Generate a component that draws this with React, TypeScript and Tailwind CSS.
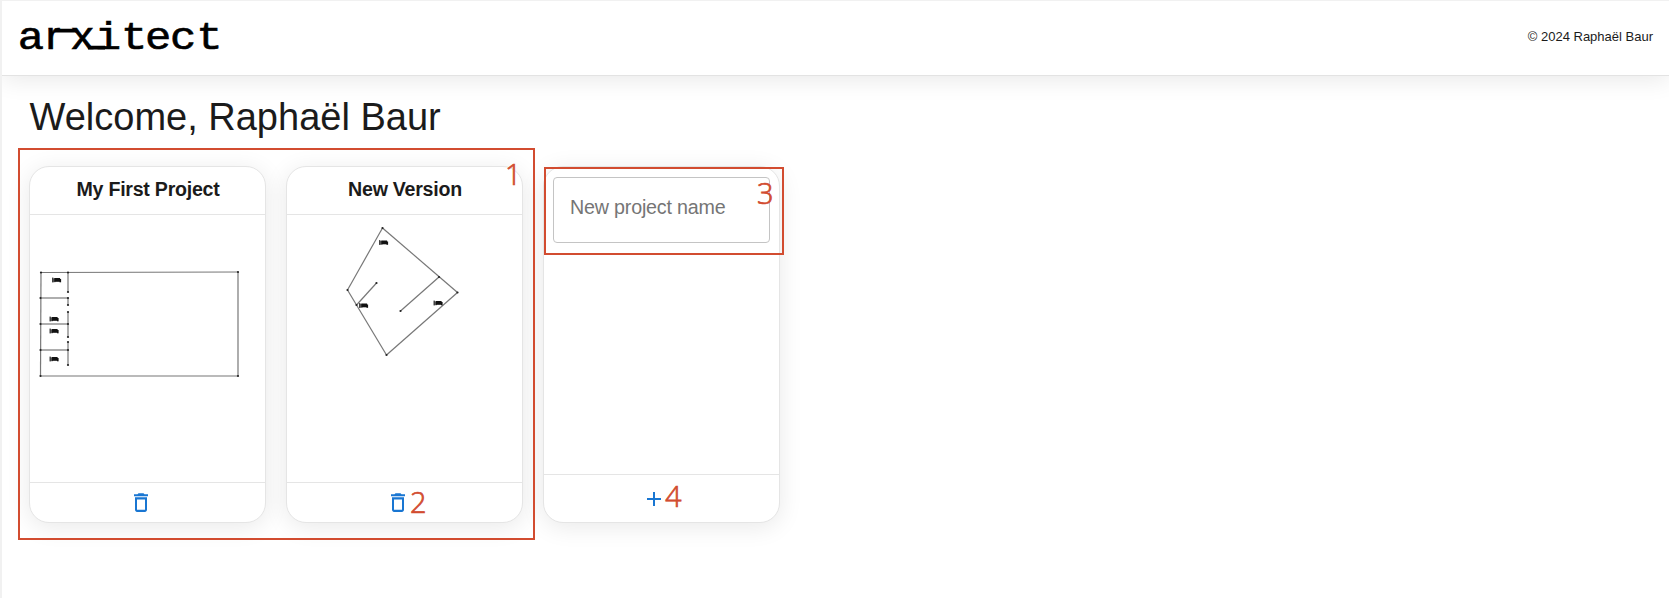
import React from "react";

type Point = [number, number];

function Plan({ lines, dots, labels }: { lines: [number, number, number, number][]; dots: Point[]; labels: Point[] }) {
  return (
    <svg width="235" height="267" viewBox="0 0 235 267" className="block">
      {lines.map(([a, b, c, d], i) => (
        <line key={i} x1={a} y1={b} x2={c} y2={d} stroke="#777" strokeWidth="1.2" />
      ))}
      {dots.map(([x, y], i) => (
        <circle key={i} cx={x} cy={y} r="1.1" fill="#222" />
      ))}
      {labels.map(([x, y], i) => (
        <g key={i} fill="#111">
          <rect x={x - 4.5} y={y - 2.4} width="1.4" height="4.8" opacity="0.8" />
          <rect x={x - 3.4} y={y - 1.6} width="2.4" height="3.8" opacity="0.65" />
          <rect x={x - 2.2} y={y - 2} width="5.8" height="3.8" />
          <rect x={x + 3} y={y - 1} width="1.6" height="3.3" />
        </g>
      ))}
    </svg>
  );
}

function TrashIcon() {
  return (
    <svg width="24" height="25" viewBox="0 0 24 24" preserveAspectRatio="none" fill="#1976d2" className="block">
      <path d="M6 19c0 1.1.9 2 2 2h8c1.1 0 2-.9 2-2V7H6v12zM8 9h8v10H8V9zm7.5-5-1-1h-5l-1 1H5v2h14V4z" />
    </svg>
  );
}

const CARD =
  "flex h-[357px] w-[237px] flex-col overflow-hidden rounded-[20px] border border-[#e5e5e5] bg-white shadow-[0_4px_25px_rgba(0,0,0,0.09)]";

function ProjectCard({ title, children }: { title: string; children: React.ReactNode }) {
  return (
    <article className={CARD}>
      <h2 className="flex h-[48px] shrink-0 items-center justify-center border-b border-[#e5e5e5] pb-px pl-px text-[19.6px] font-bold tracking-[-0.25px]">
        {title}
      </h2>
      <div className="h-[267px] shrink-0">{children}</div>
      <footer className="flex flex-1 items-center justify-center border-t border-[#e5e5e5] pr-[14px]">
        <button aria-label="Delete project">
          <TrashIcon />
        </button>
      </footer>
    </article>
  );
}

function Logo() {
  return (
    <svg width="206" height="54" viewBox="0 0 206 54" className="block">
      <g transform="scale(1.14 1)">
        <text
          y="39"
          fontFamily="'Liberation Mono', monospace"
          fontSize="38.5"
          fill="#000"
          stroke="#000"
          strokeWidth="0.6"
        >
          <tspan x="-1">a</tspan>
          <tspan x="23.5" fontFamily="'Liberation Sans', sans-serif">r</tspan>
          <tspan x="46" fontFamily="'Liberation Sans', sans-serif">x</tspan>
          <tspan x="66.5 89.5 110.5 132.5 155.5">itect</tspan>
        </text>
      </g>
      <path d="M36 20.3H57M69 37.4H86" stroke="#000" strokeWidth="3.8" transform="translate(0 0.3)" />
    </svg>
  );
}

export default function App() {
  return (
    <div className="relative flex h-[598px] w-[1669px] flex-col overflow-hidden border-t border-l-2 border-[#f1f1f1] bg-white font-['Liberation_Sans',Arial,sans-serif] text-[#1b1b1b]">
      <header className="flex h-[75px] shrink-0 items-center justify-between border-b border-[#e3e3e3] bg-white pr-[16px] pb-[2px] pl-[17px] shadow-[0_4px_25px_rgba(0,0,0,0.09)]">
        <Logo />
        <span className="mb-[2px] text-[13px] leading-none">© 2024 Raphaël Baur</span>
      </header>
      <main className="px-[27px]">
        <h1 className="mt-[18px] pl-[0.5px] text-[38px] leading-[46px]">Welcome, Raphaël Baur</h1>
        <section className="mt-[26px] flex gap-[20px]">
          <ProjectCard title="My First Project">
            <Plan
              lines={[
                [11, 57.5, 208, 57], [208, 57, 208, 161], [208, 161, 10.5, 161], [10.5, 161, 11, 57.5],
                [38, 57.5, 38, 77], [10.5, 83, 38, 83], [38, 83, 38, 90], [38, 97, 38, 122],
                [10.5, 109, 38, 109], [38, 127, 38, 150], [10.5, 135, 38, 135],
              ]}
              dots={[
                [11, 57.5], [208, 57], [208, 161], [10.5, 161], [38, 57.5], [38, 77], [10.5, 83], [38, 83],
                [38, 90], [38, 97], [38, 122], [10.5, 109], [38, 109], [38, 127], [38, 150], [10.5, 135], [38, 135],
              ]}
              labels={[[26.5, 65], [24, 104], [24, 116], [24, 144]]}
            />
          </ProjectCard>
          <ProjectCard title="New Version">
            <Plan
              lines={[
                [95.5, 13, 170.5, 77.5], [170.5, 77.5, 99.5, 140], [99.5, 140, 60.5, 75], [60.5, 75, 95.5, 13],
                [89.5, 68, 69.5, 90], [152, 62, 113.5, 96],
              ]}
              dots={[[95.5, 13], [170.5, 77.5], [99.5, 140], [60.5, 75], [89.5, 68], [69.5, 90], [152, 62], [113.5, 96]]}
              labels={[[96.5, 27.5], [76.5, 90.5], [151, 88]]}
            />
          </ProjectCard>
          <article className={CARD}>
            <div className="h-[307px] shrink-0 px-[9px] pt-[10px]">
              <input
                placeholder="New project name"
                className="block h-[66px] w-[217px] rounded-[4px] border border-[#c4c4c4] bg-white pr-3 pb-[6px] pl-[16px] text-[19.7px] tracking-[-0.2px] placeholder:text-[#757575]"
              />
            </div>
            <footer className="flex flex-1 items-center justify-center border-t border-[#e5e5e5] pr-[15px]">
              <button aria-label="Add project">
                <svg width="24" height="24" viewBox="0 0 24 24" fill="#1976d2" className="block">
                  <path d="M19 13h-6v6h-2v-6H5v-2h6V5h2v6h6z" />
                </svg>
              </button>
            </footer>
          </article>
        </section>
      </main>
      <div className="pointer-events-none absolute top-[147px] left-[15.5px] h-[392px] w-[517px] border-2 border-[#d24c30]" />
      <div className="pointer-events-none absolute top-[166px] left-[542px] h-[88px] w-[240px] border-2 border-[#d24c30]" />
      <div className="pointer-events-none absolute inset-0 font-['Open_Sans','Noto_Sans',sans-serif] text-[29px] leading-[40px] font-light text-[#d24c30] [-webkit-text-stroke:0.7px_#d24c30]">
        <span className="absolute top-[153px] left-[503px]">1</span>
        <span className="absolute top-[481px] left-[408px]">2</span>
        <span className="absolute top-[172px] left-[755px]">3</span>
        <span className="absolute top-[475px] left-[663px]">4</span>
      </div>
    </div>
  );
}
